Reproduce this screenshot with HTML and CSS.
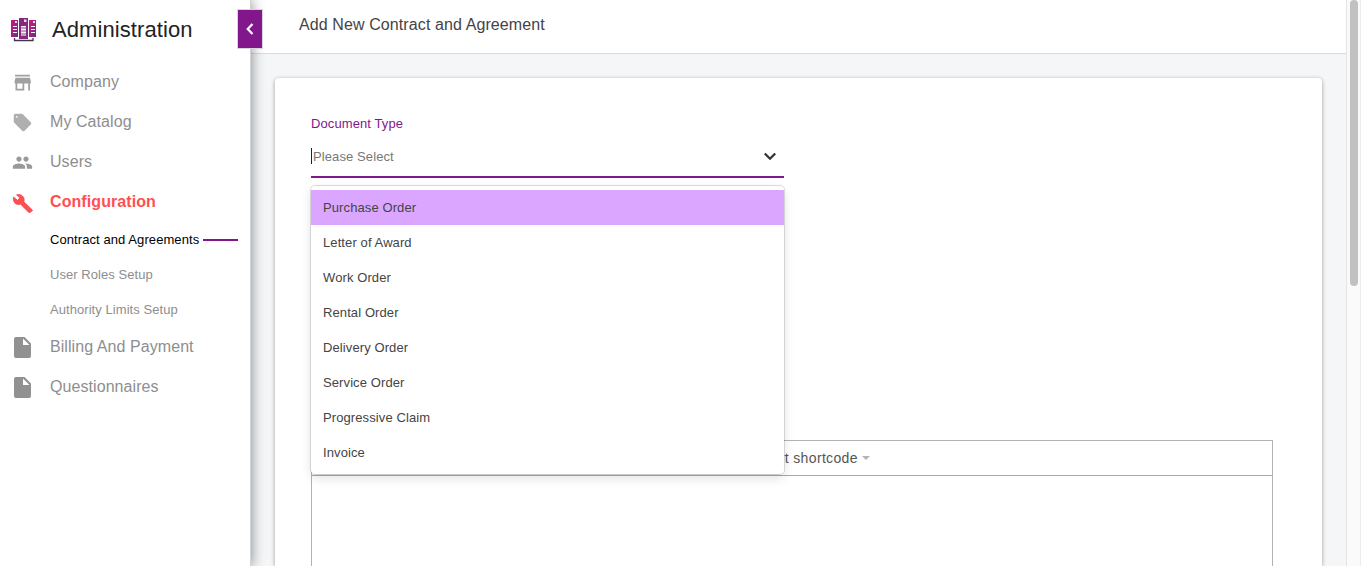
FILE: index.html
```html
<!DOCTYPE html>
<html lang="en">
<head>
<meta charset="utf-8">
<title>Administration</title>
<link rel="stylesheet" href="styles.css">
</head>
<body>
<div class="app">
  <aside class="sidebar">
    <header class="brand">
      <svg class="brand-icon" width="26" height="26" viewBox="0 0 26 26">
        <defs><linearGradient id="g" x1="0" y1="0" x2="1" y2="1"><stop offset="0" stop-color="#d3187c"/><stop offset="1" stop-color="#6d2b86"/></linearGradient></defs>
        <path d="M3.500 21v2.500h18.500V21" fill="none" stroke="#40334a" stroke-width="1.300"/>
        <path d="M0 3h7v17H0z" fill="url(#g)"/>
        <path d="M18 3h7v17h-7z" fill="url(#g)"/>
        <path d="M8 1h9v21H8z" fill="#85297f"/>
        <path d="M4 4h2v2H4zM22 4h2v2h-2zM13 2.500h2.500v2.500H13z" fill="#f5d9ec"/>
        <path d="M2 9.500h4M2 12.500h4M2 15.500h4M20 9.500h4M20 12.500h4M20 15.500h4" stroke="#fff"/>
        <path d="M10 9h5v10h-5z" fill="#c49bc6"/>
        <path d="M10 9.500h5M10 12.500h5M10 15.500h5" stroke="#f8eff8"/>
      </svg>
      <h1 class="brand-name">Administration</h1>
    </header>
    <nav class="nav">
      <a class="nav-item"><svg class="nav-icon" viewBox="0 0 24 24"><path fill="#a0a0a0" d="M20.500 3h-17v2h17zM21.500 13v-2.500l-1-4H4l-1 4V13h1v8h10v-8h4.500v8h2v-8zM12 19H6v-6h6z"/></svg>Company</a>
      <a class="nav-item"><svg class="nav-icon" viewBox="0 0 24 24"><path fill="#afafaf" d="M21.410 11.580l-9-9C12.050 2.220 11.550 2 11 2H4c-1.100 0-2 .900-2 2v7c0 .550.220 1.050.590 1.420l9 9c.360.360.860.580 1.410.580s1.050-.220 1.410-.590l7-7c.370-.360.590-.860.590-1.410s-.230-1.060-.590-1.420zM5.500 6.500a1 1 0 1 1 0-2 1 1 0 0 1 0 2z"/></svg>My Catalog</a>
      <a class="nav-item"><svg class="nav-icon" viewBox="0 0 24 24"><path fill="#999" d="M16 11c1.660 0 2.990-1.340 2.990-3S17.660 5 16 5s-3 1.340-3 3 1.340 3 3 3zm-8 0c1.660 0 2.990-1.340 2.990-3S9.660 5 8 5 5 6.340 5 8s1.340 3 3 3zm0 2c-2.330 0-7 1.170-7 3.500V19h14v-2.500C15 14.170 10.330 13 8 13zm8 0c-.290 0-.620.020-.970.050 1.160.840 1.970 1.970 1.970 3.450V19h6v-2.500c0-2.330-4.670-3.500-7-3.500z"/></svg>Users</a>
      <a class="nav-item nav-item-active"><svg class="nav-icon" viewBox="0 0 24 24"><path fill="#ff4f52" stroke="#e8434b" stroke-width=".8" d="M23.200 20.500l-9.600-9.300c.700-2.300.300-4.700-1.500-6.500-1.800-1.800-4.600-2.300-6.900-1.400L9 6.700 6.200 9.500 2 5.800C1 8 1.500 10.700 3.300 12.500c1.800 1.800 4.200 2.200 6.400 1.400l9.500 9.400c.400.400 1 .400 1.400 0l2.600-1.800c.400-.300.400-.700 0-1z"/></svg>Configuration</a>
      <div class="subnav">
        <a class="sub-item sub-item-active">Contract and Agreements<span class="sub-line"></span></a>
        <a class="sub-item">User Roles Setup</a>
        <a class="sub-item">Authority Limits Setup</a>
      </div>
      <a class="nav-item"><svg class="nav-icon nav-icon-file" viewBox="0 0 17 21"><path fill="#919191" d="M2 0h8.500L17 6.500V19a2 2 0 0 1-2 2H2a2 2 0 0 1-2-2V2a2 2 0 0 1 2-2zM9 1.500V8h6.500z"/></svg>Billing And Payment</a>
      <a class="nav-item"><svg class="nav-icon nav-icon-file" viewBox="0 0 17 21"><path fill="#919191" d="M2 0h8.500L17 6.500V19a2 2 0 0 1-2 2H2a2 2 0 0 1-2-2V2a2 2 0 0 1 2-2zM9 1.500V8h6.500z"/></svg>Questionnaires</a>
    </nav>
    <button class="collapse"><svg width="8" height="12" viewBox="0 0 8 12"><path d="M6.500 1L1.700 6l4.800 5" fill="none" stroke="#fff" stroke-width="2.200"/></svg></button>
  </aside>
  <main class="main">
    <header class="topbar">Add New Contract and Agreement</header>
    <section class="card">
      <div class="field">
        <div class="label">Document Type</div>
        <div class="select">
          <span class="placeholder">Please Select</span>
          <svg width="14" height="9" viewBox="0 0 14 9"><path d="M1.800 1.500L7 6.700l5.200-5.200" fill="none" stroke="#333" stroke-width="2.300"/></svg>
        </div>
        <div class="menu">
          <div class="option option-focused">Purchase Order</div>
          <div class="option">Letter of Award</div>
          <div class="option">Work Order</div>
          <div class="option">Rental Order</div>
          <div class="option">Delivery Order</div>
          <div class="option">Service Order</div>
          <div class="option">Progressive Claim</div>
          <div class="option">Invoice</div>
        </div>
      </div>
      <div class="editor">
        <div class="toolbar"><span>Insert shortcode</span><span class="caret"></span></div>
      </div>
    </section>
  </main>
  <div class="scrollbar"><div class="thumb"></div></div>
</div>
</body>
</html>
```

FILE: styles.css
```css
* { box-sizing: border-box; }
body {
  margin: 0;
  overflow: hidden;
  font-family: "Liberation Sans", Arial, sans-serif;
  font-size: 13px;
  letter-spacing: 0.1px;
  color: #444;
}
.app { display: flex; height: 566px; background: #f4f6f8; }

.sidebar {
  position: relative;
  z-index: 2;
  width: 251px;
  flex: none;
  background: #fff;
  border-right: 1px solid #d0d4d8;
  box-shadow: 1px 0 12px rgba(0, 0, 0, .42);
}
.brand { display: flex; align-items: center; height: 62px; padding: 0 0 2px 11px; }
.brand-icon { flex: none; }
.brand-name { margin: 0 0 0 15px; font-size: 22px; font-weight: 400; letter-spacing: 0.08px; color: #222; }
.nav { display: flex; flex-direction: column; }
.nav-item {
  display: flex;
  align-items: center;
  height: 40px;
  padding-left: 12px;
  font-size: 16px;
  letter-spacing: 0.07px;
  color: #8e8e8e;
}
.nav-icon { width: 21px; height: 21px; margin-right: 17px; }
.nav-icon-file { width: 17px; height: 21px; margin: 0 19px 0 2px; }
.nav-item-active { font-weight: 700; color: #ff4f52; letter-spacing: 0.08px; }
.subnav { display: flex; flex-direction: column; height: 105px; }
.sub-item {
  display: flex;
  align-items: center;
  height: 35px;
  padding: 0 12px 0 50px;
  letter-spacing: 0.06px;
  color: #8e8e8e;
}
.sub-item-active { color: #000; letter-spacing: 0.08px; }
.sub-line { flex: 1; height: 2px; margin-left: 4px; background: #82178b; }
.collapse {
  position: absolute;
  top: 9px;
  left: 237px;
  display: flex;
  align-items: center;
  justify-content: center;
  width: 26px;
  height: 40px;
  padding: 0;
  background: #82178b;
  border: 1px solid #d8d5de;
}

.main { display: flex; flex-direction: column; flex: 1; min-width: 0; }
.topbar {
  flex: none;
  height: 54px;
  padding: 15px 0 0 48px;
  font-size: 16px;
  line-height: 20px;
  letter-spacing: 0.1px;
  background: #fff;
  border-bottom: 1px solid #d9dcdf;
}
.card {
  display: flex;
  flex-direction: column;
  flex: 1;
  margin: 24px 24px 0;
  padding: 36px 49px 0 36px;
  background: #fff;
  border-radius: 4px 4px 0 0;
  box-shadow: 0 1px 4px rgba(0, 0, 0, .36);
}
.field { position: relative; flex: none; width: 473px; height: 326px; }
.label { line-height: 20px; color: #82178b; }
.select {
  display: flex;
  align-items: center;
  justify-content: space-between;
  height: 44px;
  padding: 2px 7px 0 0;
  border-bottom: 2px solid #82178b;
}
.placeholder { padding: 1px 0 0 1px; border-left: 1px solid #222; line-height: 15px; color: #777; }
.menu {
  position: absolute;
  top: 72px;
  left: 0;
  width: 473px;
  padding: 4px 0;
  background: #fff;
  border-radius: 4px;
  box-shadow: 0 0 0 1px rgba(0, 0, 0, .12), 0 4px 11px rgba(0, 0, 0, .12);
}
.option { height: 35px; padding-left: 12px; line-height: 35px; }
.option-focused { background: #dba6ff; }
.editor { flex: 1; border: 1px solid #b3b3b3; border-bottom: 0; }
.toolbar {
  display: flex;
  align-items: center;
  height: 35px;
  padding-left: 440px;
  font-size: 14px;
  letter-spacing: 0.34px;
  color: #555;
  border-bottom: 1px solid #a8a8a8;
}
.caret { margin-left: 4px; border: 4px solid transparent; border-top-color: #b0b5ba; border-bottom: 0; }
.scrollbar { width: 15px; flex: none; padding-left: 3px; background: #fafafa; border-left: 1px solid #e4e4e4; border-right: 1px solid #ececec; }
.thumb { width: 8px; height: 286px; background: #c1c1c1; border-radius: 4px; }
```
